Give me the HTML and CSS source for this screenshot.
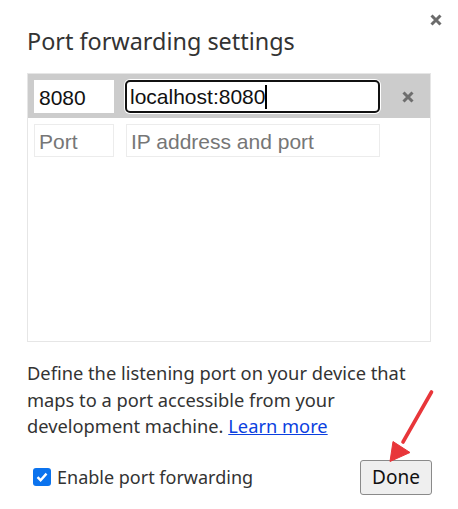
FILE: index.html
```html
<!DOCTYPE html>
<html>
<head>
<meta charset="utf-8">
<link rel="stylesheet" href="styles.css">
</head>
<body>
<div class="dialog">
  <svg class="close" width="12" height="12" viewBox="0 0 12 12"><path d="M1.5 1.5L10.5 10.5M10.5 1.5L1.5 10.5" stroke="#6b6b6b" stroke-width="3"/></svg>
  <h1 class="title">Port forwarding settings</h1>
  <div class="table">
    <div class="row row-active">
      <div class="field port">8080</div>
      <div class="field addr focused">localhost:8080<span class="caret"></span></div>
      <svg class="del" width="12" height="12" viewBox="0 0 12 12"><path d="M1.5 1.5L10.5 10.5M10.5 1.5L1.5 10.5" stroke="#6e6e6e" stroke-width="3"/></svg>
    </div>
    <div class="row">
      <div class="field port empty">Port</div>
      <div class="field addr empty">IP address and port</div>
    </div>
  </div>
  <p class="desc">Define the listening port on your device that maps to a port accessible from your development machine. <a href="#">Learn more</a></p>
  <div class="footer">
    <label class="check"><span class="box"><svg width="14" height="14" viewBox="0 0 14 14"><path d="M2.5 7.2L5.6 10.2L11.5 3.6" stroke="#fff" stroke-width="2.4" fill="none"/></svg></span>Enable port forwarding</label>
    <button class="done">Done</button>
  </div>
  <svg class="arrow" width="60" height="90" viewBox="0 0 60 90"><path d="M51.5 12L23 62" stroke="#e8363a" stroke-width="3.6" stroke-linecap="round"/><path d="M10 81.5L13 61.5L30 72.5Z" fill="#e8363a" stroke="#e8363a" stroke-width="1" stroke-linejoin="round"/></svg>
</div>
</body>
</html>
```
FILE: styles.css
```css
html, body { margin: 0; padding: 0; background: #fff; }
body { width: 458px; height: 509px; overflow: hidden; }
.dialog {
  position: relative;
  padding: 27px 27px 0 27px;
  font-family: "Noto Sans", "Open Sans", sans-serif;
  color: #333;
}
.close { position: absolute; left: 430px; top: 14px; }
.title {
  margin: 0 0 17px 0;
  font-weight: 400;
  font-size: 23.4px;
  line-height: 29px;
  color: #333;
}
.table {
  height: 267px;
  border: 1px solid #e6e6e6;
  background: #fff;
}
.row {
  display: flex;
  align-items: center;
  padding: 6px 6px 6px 6px;
}
.row-active { background: #cccccc; padding: 6px 6px 5px 6px; }
.field {
  box-sizing: border-box;
  height: 33px;
  background: #fff;
  font-family: "Liberation Sans", Arial, sans-serif;
  font-size: 21px;
  line-height: 33px;
  color: #111;
  padding: 0 4px;
  border: 1px solid #ececec;
  white-space: nowrap;
}
.row-active .port { border-color: #fff; }
.port { width: 80px; }
.addr { width: 255px; margin-left: 11px; }
.row:not(.row-active) .addr { margin-left: 12px; width: 254px; }
.focused {
  border: 2px solid #111;
  border-radius: 5px;
  line-height: 29px;
  padding: 0 3px;
  box-shadow: 0 0 0 1px #fff;
}
.caret { display: inline-block; width: 2px; height: 24px; background: #000; vertical-align: -5px; }
.empty { color: #767676; }
.del { margin-left: 22px; }
.desc {
  margin: 18px 0 0 0;
  font-size: 18.3px;
  line-height: 26.5px;
  color: #333;
}
.desc a { color: #0b3fe0; text-decoration: underline; }
.footer {
  display: flex;
  justify-content: space-between;
  align-items: center;
  margin-top: 20px;
}
.check {
  display: flex;
  align-items: center;
  font-size: 18px;
  color: #333;
  margin-left: 6px;
}
.box {
  width: 18px;
  height: 18px;
  border-radius: 3px;
  background: #0b73ee;
  display: flex;
  align-items: center;
  justify-content: center;
  margin-right: 6px;
}
.done {
  width: 72px;
  height: 35px;
  margin-right: -1px;
  background: #efefef;
  border: 1px solid #8a8a8a;
  border-radius: 3px;
  font-family: "Noto Sans", "Open Sans", sans-serif;
  font-size: 19px;
  color: #111;
  padding: 0;
}
.arrow { position: absolute; left: 380px; top: 380px; }
```
